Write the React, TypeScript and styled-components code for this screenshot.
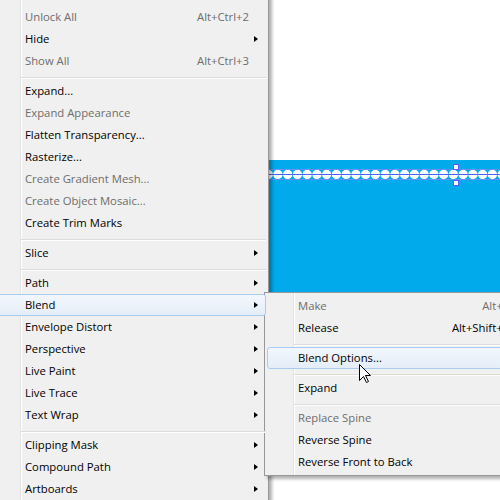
import React from "react";
import styled, { createGlobalStyle } from "styled-components";

const Global = createGlobalStyle`
  html, body { margin: 0; padding: 0; }
  body {
    width: 500px;
    height: 500px;
    overflow: hidden;
    background: #ffffff;
    font-family: "Open Sans", "Noto Sans", sans-serif;
  }
`;

const Stage = styled.div`
  position: relative;
  width: 500px;
  height: 500px;
  overflow: hidden;
  background: #ffffff;
`;

const Canvas = styled.div`
  display: flex;
  flex-direction: column;
  height: 100%;
  padding-top: 160px;
  box-sizing: border-box;
`;

const Band = styled.div`
  height: 220px;
  background: #00aaeb;
`;

const Artwork = styled.svg`
  display: block;
`;

const Menu = styled.div<{ $left: number; $top: number; $width: number; $padTop?: number }>`
  position: absolute;
  left: ${(p) => p.$left}px;
  top: ${(p) => p.$top}px;
  width: ${(p) => p.$width}px;
  box-sizing: border-box;
  display: flex;
  flex-direction: column;
  padding: ${(p) => p.$padTop ?? 2}px 2px 2px;
  background: #f0f0f0;
  border: 1px solid #979797;
  box-shadow: 3px 3px 3px rgba(0, 0, 0, 0.3);
  font-size: 11.3px;

  &::before {
    content: "";
    position: absolute;
    left: 28px;
    top: 0;
    bottom: 0;
    width: 1px;
    background: #e2e3e3;
    box-shadow: 1px 0 0 #ffffff;
  }
`;

const Item = styled.div<{ $disabled?: boolean; $active?: boolean }>`
  position: relative;
  z-index: 1;
  display: flex;
  align-items: center;
  height: 22px;
  box-sizing: border-box;
  padding: 0 0 2px 30px;
  white-space: nowrap;
  color: ${(p) => (p.$disabled ? "#6d6d6d" : "#000000")};
  border: 1px solid ${(p) => (p.$active ? "#a8cbf0" : "transparent")};
  border-radius: 3px;
  background: ${(p) =>
    p.$active ? "linear-gradient(#f2f7fc, #e4edf8)" : "transparent"};
`;

const Label = styled.span`
  flex: 1;
`;

const Shortcut = styled.span``;

const ArrowCell = styled.span`
  display: flex;
  align-items: center;
  width: 16px;
  height: 100%;
  padding: 2px 0 0 5px;
  box-sizing: border-box;
`;

const Arrow = styled.span`
  width: 0;
  height: 0;
  border-top: 3.5px solid transparent;
  border-bottom: 3.5px solid transparent;
  border-left: 4px solid #000000;
`;

const Separator = styled.div`
  position: relative;
  z-index: 1;
  height: 8px;
  margin-left: 27px;

  &::before {
    content: "";
    position: absolute;
    left: 0;
    right: 0;
    top: 5px;
    height: 1px;
    background: #dcdcdc;
    box-shadow: 0 1px 0 #ffffff;
  }
`;

const Pointer = styled.svg`
  position: absolute;
  left: 359px;
  top: 364px;
  z-index: 5;
`;

type Entry =
  | { sep: true }
  | {
      sep?: false;
      label: string;
      shortcut?: string;
      sub?: boolean;
      disabled?: boolean;
      active?: boolean;
    };

const objectMenu: Entry[] = [
  { label: "Unlock All", shortcut: "Alt+Ctrl+2", disabled: true },
  { label: "Hide", sub: true },
  { label: "Show All", shortcut: "Alt+Ctrl+3", disabled: true },
  { sep: true },
  { label: "Expand..." },
  { label: "Expand Appearance", disabled: true },
  { label: "Flatten Transparency..." },
  { label: "Rasterize..." },
  { label: "Create Gradient Mesh...", disabled: true },
  { label: "Create Object Mosaic...", disabled: true },
  { label: "Create Trim Marks" },
  { sep: true },
  { label: "Slice", sub: true },
  { sep: true },
  { label: "Path", sub: true },
  { label: "Blend", sub: true, active: true },
  { label: "Envelope Distort", sub: true },
  { label: "Perspective", sub: true },
  { label: "Live Paint", sub: true },
  { label: "Live Trace", sub: true },
  { label: "Text Wrap", sub: true },
  { sep: true },
  { label: "Clipping Mask", sub: true },
  { label: "Compound Path", sub: true },
  { label: "Artboards", sub: true },
];

const blendMenu: Entry[] = [
  { label: "Make", shortcut: "Alt+Ctrl+B", disabled: true },
  { label: "Release", shortcut: "Alt+Shift+Ctrl+B" },
  { sep: true },
  { label: "Blend Options...", active: true },
  { sep: true },
  { label: "Expand" },
  { sep: true },
  { label: "Replace Spine", disabled: true },
  { label: "Reverse Spine" },
  { label: "Reverse Front to Back" },
];

function MenuList({ entries }: { entries: Entry[] }) {
  return (
    <>
      {entries.map((e, i) =>
        e.sep ? (
          <Separator key={i} />
        ) : (
          <Item key={i} $disabled={e.disabled} $active={e.active}>
            <Label>{e.label}</Label>
            {e.shortcut && <Shortcut>{e.shortcut}</Shortcut>}
            <ArrowCell>{e.sub && <Arrow />}</ArrowCell>
          </Item>
        )
      )}
    </>
  );
}

function BlendPath() {
  const dots: number[] = [];
  for (let x = 4.9; x < 510; x += 9.75) dots.push(x);
  return (
    <Artwork width={500} height={30} viewBox="0 0 500 30">
      {dots.map((x, i) => (
        <circle key={i} cx={x} cy={14.5} r={4.7} fill="#ffffff" />
      ))}
      <line x1={0} x2={500} y1={9.5} y2={9.5} stroke="#8c84ff" strokeWidth={1} opacity={0.7} />
      <line x1={0} x2={500} y1={19.5} y2={19.5} stroke="#8c84ff" strokeWidth={1} opacity={0.7} />
      <line x1={0} x2={500} y1={14.5} y2={14.5} stroke="#4a62f5" strokeWidth={1} />
      <rect x={453.5} y={4.5} width={5} height={5} fill="#ffffff" stroke="#5a5aff" />
      <rect x={453.5} y={20.5} width={5} height={5} fill="#ffffff" stroke="#5a5aff" />
    </Artwork>
  );
}

export default function App() {
  return (
    <>
      <Global />
      <Stage>
        <Canvas>
          <Band>
            <BlendPath />
          </Band>
        </Canvas>
        <Menu $left={-9} $top={-16} $width={278} $padTop={21}>
          <MenuList entries={objectMenu} />
        </Menu>
        <Menu $left={264} $top={292} $width={291}>
          <MenuList entries={blendMenu} />
        </Menu>
        <Pointer width={13} height={20} viewBox="0 0 13 20">
          <path
            d="M0.5 0.5 L0.5 16.5 L4.5 12.5 L7.5 18.5 L9.5 17.5 L6.5 11.5 L11.5 11.5 Z"
            fill="#ffffff"
            stroke="#000000"
            strokeWidth={1}
            strokeLinejoin="miter"
          />
        </Pointer>
      </Stage>
    </>
  );
}
